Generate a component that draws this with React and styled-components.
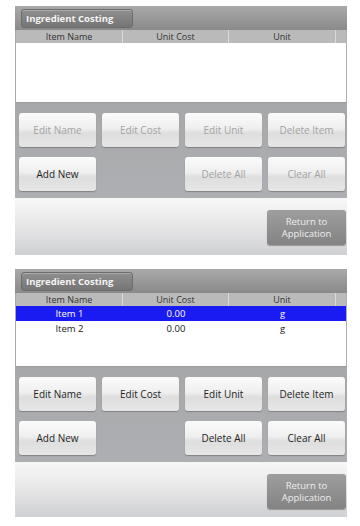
import React from "react";
import styled, { createGlobalStyle } from "styled-components";

const GlobalStyle = createGlobalStyle`
  body {
    margin: 0;
    background: #ffffff;
    font-family: "Open Sans", "Noto Sans", sans-serif;
  }
`;

const Page = styled.div`
  display: flex;
  flex-direction: column;
  gap: 14px;
  padding: 6px 0 0 15px;
`;

const Screen = styled.div`
  width: 332px;
  display: flex;
  flex-direction: column;
`;

const TitleBar = styled.div`
  height: 24px;
  display: flex;
  align-items: center;
  padding-left: 6px;
  background: linear-gradient(#a9a9a9, #939393 70%, #8a8a8a);
`;

const TitlePill = styled.div`
  width: 112px;
  height: 19px;
  box-sizing: border-box;
  display: flex;
  align-items: center;
  padding-left: 4px;
  border-radius: 3px;
  border: 1px solid #6c6c6c;
  background: linear-gradient(#8f8f8f, #757575);
  box-shadow: inset 0 1px 0 rgba(255, 255, 255, 0.25);
  color: #f4f4f4;
  font-size: 9.5px;
  font-weight: 700;
`;

const Table = styled.div`
  background: #ffffff;
  border-left: 1px solid #a9a9a9;
  border-right: 1px solid #b0b0b0;
  height: ${(p) => p.$height}px;
  display: flex;
  flex-direction: column;
`;

const Grid = styled.div`
  display: grid;
  grid-template-columns: 107px 106px 107px 1fr;
  height: ${(p) => p.$h}px;
  align-items: center;
  background: ${(p) => p.$bg || "transparent"};
  color: ${(p) => p.$color || "#222"};
  font-size: ${(p) => p.$size || 9}px;
`;

const Cell = styled.div`
  text-align: center;
  height: 100%;
  display: flex;
  align-items: center;
  justify-content: center;
  border-right: ${(p) => (p.$divider ? "1px solid #dadada" : "none")};
`;

const ButtonArea = styled.div`
  background: linear-gradient(#a7a8aa, #aeafb2);
  border-top: 1px solid #9c9c9c;
  padding: ${(p) => p.$pad};
  display: grid;
  grid-template-columns: repeat(4, 77px);
  column-gap: 6px;
  row-gap: 10px;
`;

const Button = styled.div`
  height: 34px;
  display: flex;
  align-items: center;
  justify-content: center;
  border-radius: 3px;
  background: linear-gradient(#fbfbfb, #efefef 45%, #dedede 60%, #e6e6e7);
  box-shadow: 0 1px 1px rgba(0, 0, 0, 0.25);
  color: ${(p) => (p.$active ? "#1e1e1e" : "#a3a3a3")};
  font-size: 10px;
  grid-column: ${(p) => p.$col || "auto"};
`;

const Footer = styled.div`
  height: ${(p) => p.$h}px;
  background: linear-gradient(#f7f7f7, #e8e8e9 45%, #cfd0d3);
  display: flex;
  justify-content: flex-end;
  align-items: flex-start;
  padding: 12px 1px 0 0;
  box-sizing: border-box;
`;

const ReturnButton = styled.div`
  width: 79px;
  height: 35px;
  border-radius: 3px;
  background: linear-gradient(#9e9e9e, #838383);
  box-shadow: 0 1px 1px rgba(0, 0, 0, 0.3);
  color: #eeeeee;
  display: flex;
  flex-direction: column;
  align-items: center;
  justify-content: center;
`;

const ReturnLine = styled.span`
  font-size: 9.5px;
  line-height: 13px;
  height: 12px;
  display: flex;
  align-items: center;
`;

const items = [
  { name: "Item 1", cost: "0.00", unit: "g" },
  { name: "Item 2", cost: "0.00", unit: "g" },
];

const IngredientScreen = ({ rows, active, tableHeight, buttonPad, footerH }) => (
  <Screen>
    <TitleBar>
      <TitlePill>Ingredient Costing</TitlePill>
    </TitleBar>
    <Table $height={tableHeight}>
      <Grid $h={13} $bg="#bababa" $color="#333">
        <Cell $divider>Item Name</Cell>
        <Cell $divider>Unit Cost</Cell>
        <Cell $divider>Unit</Cell>
        <Cell />
      </Grid>
      {rows.map((r, i) => (
        <Grid
          key={r.name}
          $h={i === 0 ? 15 : 14}
          $size={9.5}
          $bg={i === 0 ? "#1a1af2" : "transparent"}
          $color={i === 0 ? "#ffffff" : "#222"}
        >
          <Cell>{r.name}</Cell>
          <Cell>{r.cost}</Cell>
          <Cell>{r.unit}</Cell>
          <Cell />
        </Grid>
      ))}
    </Table>
    <ButtonArea $pad={buttonPad}>
      <Button $active={active}>Edit Name</Button>
      <Button $active={active}>Edit Cost</Button>
      <Button $active={active}>Edit Unit</Button>
      <Button $active={active}>Delete Item</Button>
      <Button $active>Add New</Button>
      <Button $active={active} $col="3">Delete All</Button>
      <Button $active={active}>Clear All</Button>
    </ButtonArea>
    <Footer $h={footerH}>
      <ReturnButton>
        <ReturnLine>Return to</ReturnLine>
        <ReturnLine>Application</ReturnLine>
      </ReturnButton>
    </Footer>
  </Screen>
);

const App = () => (
  <>
    <GlobalStyle />
    <Page>
      <IngredientScreen rows={[]} active={false} tableHeight={72} buttonPad="10px 3px 7px 4px" footerH={57} />
      <IngredientScreen rows={items} active tableHeight={73} buttonPad="10px 3px 7px 4px" footerH={55} />
    </Page>
  </>
);

export default App;
